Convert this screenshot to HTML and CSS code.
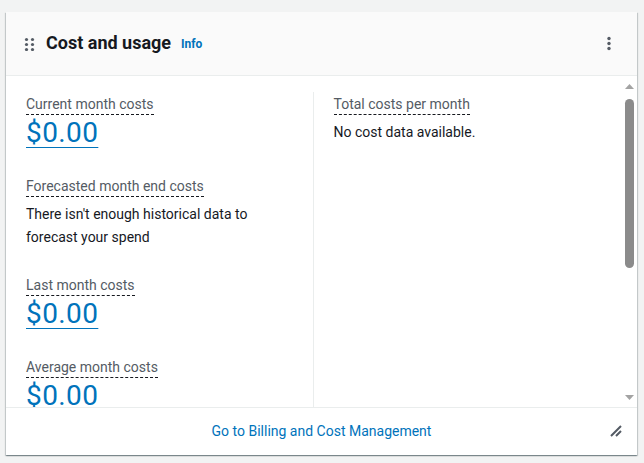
FILE: index.html
```html
<!DOCTYPE html>
<html lang="en">
<head>
<meta charset="utf-8">
<title>Cost and usage</title>
<link rel="stylesheet" href="styles.css">
</head>
<body>
<div class="card">
  <header class="card-header">
    <span class="drag-handle" aria-hidden="true">
      <svg width="12" height="14" viewBox="0 0 12 14">
        <circle cx="2.5" cy="2.5" r="1.6"/><circle cx="8.5" cy="2.5" r="1.6"/>
        <circle cx="2.5" cy="7.5" r="1.6"/><circle cx="8.5" cy="7.5" r="1.6"/>
        <circle cx="2.5" cy="12.5" r="1.6"/><circle cx="8.5" cy="12.5" r="1.6"/>
      </svg>
    </span>
    <h2 class="title">Cost and usage</h2>
    <a class="info" href="#">Info</a>
    <button class="menu" aria-label="Actions">
      <svg width="6" height="16" viewBox="0 0 6 16">
        <circle cx="3" cy="2.5" r="1.7"/><circle cx="3" cy="7.5" r="1.7"/><circle cx="3" cy="12.5" r="1.7"/>
      </svg>
    </button>
  </header>
  <div class="card-body">
    <div class="scroll-content">
      <div class="columns">
        <div class="col col-left">
          <div class="metric">
            <span class="label">Current month costs</span>
            <a class="value" href="#">$0.00</a>
          </div>
          <div class="metric metric-text">
            <span class="label">Forecasted month end costs</span>
            <p class="text">There isn't enough historical data to forecast your spend</p>
          </div>
          <div class="metric">
            <span class="label">Last month costs</span>
            <a class="value" href="#">$0.00</a>
          </div>
          <div class="metric">
            <span class="label">Average month costs</span>
            <a class="value" href="#">$0.00</a>
          </div>
          <div class="metric">
            <span class="label">Top costs for current month</span>
            <p class="text">No cost data available.</p>
          </div>
        </div>
        <div class="col col-right">
          <div class="metric">
            <span class="label">Total costs per month</span>
            <p class="text">No cost data available.</p>
          </div>
        </div>
      </div>
    </div>
    <div class="scrollbar" aria-hidden="true">
      <span class="sb-btn">
        <svg width="9" height="5" viewBox="0 0 9 5"><path d="M0 5 L4.5 0 L9 5 Z"/></svg>
      </span>
      <span class="sb-track"><span class="sb-thumb"></span></span>
      <span class="sb-btn">
        <svg width="9" height="5" viewBox="0 0 9 5"><path d="M0 0 L4.5 5 L9 0 Z"/></svg>
      </span>
    </div>
  </div>
  <footer class="card-footer">
    <a class="footer-link" href="#">Go to Billing and Cost Management</a>
  </footer>
  <span class="resize" aria-hidden="true">
    <svg width="12" height="12" viewBox="0 0 12 12">
      <path d="M1 11 L11 1 M6 11 L11 6"/>
    </svg>
  </span>
</div>
</body>
</html>
```

FILE: styles.css
```css
* { box-sizing: border-box; }

html, body {
  margin: 0;
  height: 100%;
}

body {
  background: #f2f3f3;
  padding: 12px 7px 8px 6px;
  font-family: Roboto, "Open Sans", Arial, sans-serif;
  font-size: 14px;
  line-height: 20px;
  color: #16191f;
}

.card {
  position: relative;
  height: 443px;
  background: #ffffff;
  display: flex;
  flex-direction: column;
  box-shadow: 0 1px 1px 0 rgba(0, 28, 36, 0.3),
              1px 1px 1px 0 rgba(0, 28, 36, 0.15),
              -1px 1px 1px 0 rgba(0, 28, 36, 0.15);
}

.card-header {
  flex: 0 0 auto;
  height: 64px;
  display: flex;
  align-items: center;
  padding: 0 25px 2px 18px;
  background: #fafafa;
  border-bottom: 1px solid #eaeded;
}

.drag-handle {
  display: flex;
  width: 12px;
  margin-right: 10px;
  margin-top: 2px;
}

.drag-handle svg { fill: #545b64; }

.title {
  margin: 0;
  font-size: 18px;
  line-height: 24px;
  font-weight: 700;
  color: #16191f;
}

.info {
  margin-left: 10px;
  margin-top: 3px;
  font-size: 12px;
  font-weight: 700;
  color: #0073bb;
  text-decoration: none;
}

.menu {
  margin-left: auto;
  border: 0;
  background: none;
  padding: 0;
  display: flex;
  margin-top: 2px;
}

.menu svg { fill: #545b64; }

.card-body {
  flex: 1 1 auto;
  min-height: 0;
  display: flex;
}

.scroll-content {
  flex: 1 1 auto;
  min-width: 0;
  overflow: hidden;
  padding-top: 16px;
}

.scrollbar {
  flex: 0 0 16px;
  display: flex;
  flex-direction: column;
  background: #ffffff;
}

.sb-btn {
  flex: 0 0 20px;
  display: flex;
  align-items: center;
  justify-content: center;
  padding-left: 1px;
}

.sb-btn svg { fill: #a3a3a3; }

.sb-track {
  flex: 1 1 auto;
  padding: 3px 3px 0 4px;
}

.sb-thumb {
  display: block;
  height: 169px;
  border-radius: 5px;
  background: #8b8b8b;
}

.columns {
  display: grid;
  grid-template-columns: 1fr 1fr;
}

.col {
  padding: 2px 20px 0 20px;
}

.col-left {
  border-right: 1px solid #eaeded;
  padding-bottom: 120px;
}

.metric {
  display: flex;
  flex-direction: column;
  align-items: flex-start;
  margin-bottom: 25px;
}

.metric-text {
  margin-bottom: 26px;
}

.label {
  color: #545b64;
  line-height: 20px;
  border-bottom: 1px dashed #16191f;
}

.value {
  font-size: 28px;
  line-height: 36px;
  letter-spacing: 0.4px;
  color: #0073bb;
  text-decoration: underline;
  text-decoration-thickness: 1px;
  text-underline-offset: 5px;
}

.text {
  margin: 6px 0 0 0;
  line-height: 23px;
  color: #16191f;
  max-width: 260px;
}

.card-footer {
  flex: 0 0 auto;
  height: 48px;
  border-top: 1px solid #eaeded;
  display: flex;
  align-items: center;
  justify-content: center;
  padding-bottom: 1px;
}

.footer-link {
  color: #0073bb;
  text-decoration: none;
}

.resize {
  position: absolute;
  right: 15px;
  bottom: 18px;
  display: flex;
}

.resize svg {
  stroke: #545b64;
  stroke-width: 2;
  fill: none;
}
```
